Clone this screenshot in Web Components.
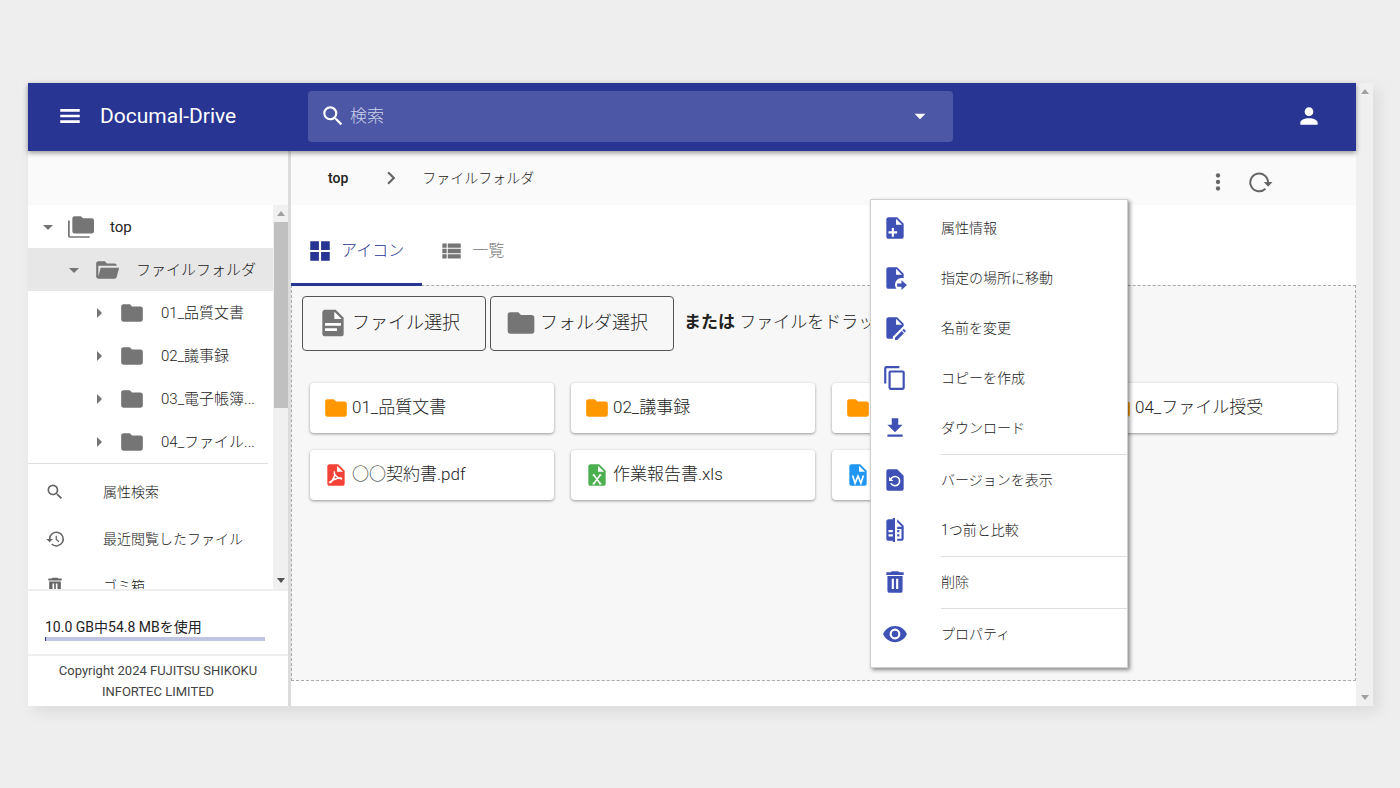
<!DOCTYPE html>
<html lang="ja">
<head>
<meta charset="utf-8">
<title>Documal-Drive</title>
<style>
  * { box-sizing: border-box; }
  body {
    margin: 0;
    min-height: 100vh;
    padding: 83px 27px 82px 28px;
    display: flex;
    background: #eeeeee;
    color: #222222;
    font: 300 14px/20px Roboto, "Noto Sans CJK JP", sans-serif;
  }
</style>
</head>
<body>
<drive-app></drive-app>

<script>
const file = 'M6,2H14L20,8V20A2,2 0 0,1 18,22H6C4.89,22 4,21.1 4,20V4C4,2.89 4.89,2 6,2Z';
const fold = '<path fill="#fff" d="M13,3.5V9H18.5Z"/>';

const icons = {
  menu: '<path d="M3,5.6H21V8H3V5.6M3,10.8H21V13.2H3V10.8M3,16H21V18.4H3V16Z"/>',
  search: '<path d="M9.5,3A6.5,6.5 0 0,1 16,9.5C16,11.11 15.41,12.59 14.44,13.73L14.71,14H15.5L20.5,19L19,20.5L14,15.5V14.71L13.73,14.44C12.59,15.41 11.11,16 9.5,16A6.5,6.5 0 0,1 3,9.5A6.5,6.5 0 0,1 9.5,3M9.5,5C7,5 5,7 5,9.5C5,12 7,14 9.5,14C12,14 14,12 14,9.5C14,7 12,5 9.5,5Z"/>',
  account: '<path d="M12,4A4,4 0 0,1 16,8A4,4 0 0,1 12,12A4,4 0 0,1 8,8A4,4 0 0,1 12,4M12,14C16.42,14 20,15.79 20,18V20H4V18C4,15.79 7.58,14 12,14Z"/>',
  down: '<path d="M7,10L12,15L17,10Z"/>',
  right: '<path d="M10,17L15,12L10,7Z"/>',
  chevron: '<path d="M8.59,16.58L13.17,12L8.59,7.41L10,6L16,12L10,18Z"/>',
  dots: '<circle cx="12" cy="6" r="2"/><circle cx="12" cy="12" r="2"/><circle cx="12" cy="18" r="2"/>',
  reload: '<path d="M17,18.2A8.2,8.2 0 1,1 19.4,13" fill="none" stroke="currentColor" stroke-width="1.8"/><path d="M15.5,12H23.5L19.5,16.4Z"/>',
  folder: '<path d="M10,4H4C2.89,4 2,4.89 2,6V18A2,2 0 0,0 4,20H20A2,2 0 0,0 22,18V8C22,6.89 21.1,6 20,6H12L10,4Z"/>',
  folderOpen: '<path d="M19,20H4C2.89,20 2,19.1 2,18V6C2,4.89 2.89,4 4,4H10L12,6H19A2,2 0 0,1 21,8H4V18L6.14,10H23.21L20.93,18.5C20.7,19.37 19.92,20 19,20Z"/>',
  folders: '<path d="M22,4H14L12,2H6A2,2 0 0,0 4,4V16A2,2 0 0,0 6,18H22A2,2 0 0,0 24,16V6A2,2 0 0,0 22,4M2,6H0V20A2,2 0 0,0 2,22H20V20.6H1.6V6Z"/>',
  history: '<path d="M5.5,13V12A8.2,8.2 0 1,1 8,18" fill="none" stroke="currentColor" stroke-width="1.8"/><path d="M1.5,12H9.5L5.5,16Z"/><path d="M13.5,8V12.5L16.8,15.2" fill="none" stroke="currentColor" stroke-width="1.5"/>',
  trash: '<path d="M9,2H15L16,3H20V5.5H4V3H8ZM5,6.5H19V20A2,2 0 0,1 17,22H7A2,2 0 0,1 5,20ZM9,9V18.5H11V9ZM13,9V18.5H15V9Z" fill-rule="evenodd"/>',
  grid: '<path d="M3,11H11V3H3M3,21H11V13H3M13,21H21V13H13M13,3V11H21V3"/>',
  list: '<path d="M9,5V9H21V5M9,19H21V15H9M9,14H21V10H9M4,9H8V5H4M4,19H8V15H4M4,14H8V10H4V14Z"/>',
  document: `<path d="${file}"/>${fold}<path fill="#fff" d="M6,12H18V14H6ZM6,16H15V18H6Z"/>`,
  fileAdd: `<path d="${file}"/>${fold}<path fill="#fff" d="M11,15V12H9V15H6V17H9V20H11V17H14V15Z"/>`,
  fileMove: '<path d="M14,17H18V14L23,18.5L18,23V20H14V17M13,9H18.5L13,3.5V9M6,2H14L20,8V12.34C19.37,12.12 18.7,12 18,12A6,6 0 0,0 12,18C12,19.54 12.58,20.94 13.53,22H6C4.89,22 4,21.1 4,20V4A2,2 0 0,1 6,2Z"/>',
  fileEdit: '<path d="M6,2C4.89,2 4,2.89 4,4V20A2,2 0 0,0 6,22H10V20.09L20,10.09V8L14,2H6M13,3.5L18.5,9H13V3.5M20.15,13C20,13 19.86,13.05 19.75,13.16L18.73,14.18L20.82,16.26L21.84,15.25C22.05,15.03 22.05,14.67 21.84,14.46L20.54,13.16C20.43,13.05 20.29,13 20.15,13M18.14,14.77L12,20.92V23H14.08L20.23,16.85L18.14,14.77Z"/>',
  copy: '<path d="M19,21H8V7H19M19,5H8A2,2 0 0,0 6,7V21A2,2 0 0,0 8,23H19A2,2 0 0,0 21,21V7A2,2 0 0,0 19,5M16,1H4A2,2 0 0,0 2,3V17H4V3H16V1Z"/>',
  download: '<path d="M5,20H19V18H5M19,9H15V3H9V9H5L12,16L19,9Z"/>',
  restore: '<path d="M14,2H6A2,2 0 0,0 4,4V20A2,2 0 0,0 6,22H18A2,2 0 0,0 20,20V8L14,2M12,18C9.95,18 8.19,16.76 7.42,15H9.13C9.76,15.9 10.81,16.5 12,16.5A3.5,3.5 0 0,0 15.5,13A3.5,3.5 0 0,0 12,9.5C10.65,9.5 9.5,10.28 8.9,11.4L10.5,13H6.5V9L7.8,10.3C8.69,8.92 10.23,8 12,8A5,5 0 0,1 17,13A5,5 0 0,1 12,18Z"/>',
  compare: '<path d="M10,18H6V16H10V18M10,14H6V12H10V14M10,1V2H6C4.89,2 4,2.89 4,4V20A2,2 0 0,0 6,22H10V23H12V1H10M20,8V20C20,21.11 19.11,22 18,22H14V20H18V11H14V9H18.5L14,4.5V2L20,8M16,14H14V12H16V14M16,18H14V16H16V18Z"/>',
  eye: '<path d="M12,9A3,3 0 0,0 9,12A3,3 0 0,0 12,15A3,3 0 0,0 15,12A3,3 0 0,0 12,9M12,17A5,5 0 0,1 7,12A5,5 0 0,1 12,7A5,5 0 0,1 17,12A5,5 0 0,1 12,17M12,4.5C7,4.5 2.73,7.61 1,12C2.73,16.39 7,19.5 12,19.5C17,19.5 21.27,16.39 23,12C21.27,7.61 17,4.5 12,4.5Z"/>',
  pdf: `<path d="${file}"/>${fold}<path d="M10.6,8.5C9.6,11 12.5,15 17,15.6C18,14 11,14.5 6,18.8C7,20 10,15.5 11,11.5" fill="none" stroke="#fff" stroke-width="1.4" stroke-linejoin="round"/>`,
  xls: `<path d="${file}"/>${fold}<path d="M9,12L15,20M15,12L9,20M8,12H10M14,12H16M8,20H10M14,20H16" fill="none" stroke="#fff" stroke-width="1.5"/>`,
  doc: `<path d="${file}"/>${fold}<path d="M7,12.5L9.3,19.5L12,13L14.7,19.5L17,12.5" fill="none" stroke="#fff" stroke-width="1.5"/>`
};

// attaches the shadow root and fills it from a template
class Base extends HTMLElement {
  constructor(){
    super();
    this.attachShadow({mode:'open'});
  }
  connectedCallback(){
    const template = document.createElement('template');
    template.innerHTML = `<style>
      *{ box-sizing: border-box; }
      button, input{ font: inherit; color: inherit; background: none; border: 0; margin: 0; padding: 0; outline: none; }
      button{ cursor: pointer; text-align: left; }
      a{ color: inherit; text-decoration: none; }
    </style>` + this.render();
    this.shadowRoot.appendChild(template.content.cloneNode(true));
  }
}

class DriveIcon extends Base {
  render(){
    return `
    <style>
      :host{ display: block; flex: none; width: 26px; height: 26px; }
      :host([size="small"]){ width: 20px; height: 20px; }
      :host([size="medium"]){ width: 24px; height: 24px; }
      :host([size="large"]){ width: 32px; height: 32px; }
      svg{ display: block; width: 100%; height: 100%; fill: currentColor; }
    </style>
    <svg viewBox="0 0 24 24" aria-hidden="true">${icons[this.getAttribute('name')]}</svg>`
  }
}

class ScrollTrack extends Base {
  render(){
    return `
    <style>
      :host{ display: flex; flex-direction: column; flex: none; width: 17px; background: #f0f0f0; }
      :host([thumb]){ width: 15px; }
      i{ height: 17px; display: flex; align-items: center; justify-content: center; }
      i::before{ content: ""; border: 4px solid transparent; }
      .up::before{ border-top: 0; border-bottom: 5px solid #a0a0a0; }
      .down::before{ border-bottom: 0; border-top: 5px solid #a0a0a0; }
      :host([thumb]) .down::before{ border-top-color: #505050; }
      .rail{ flex: 1; }
      .thumb{ display: none; height: 53%; margin-left: 1px; background: #c0c0c0; }
      :host([thumb]) .thumb{ display: block; }
    </style>
    <i class="up"></i><div class="rail"><div class="thumb"></div></div><i class="down"></i>`
  }
}

class DriveHeader extends Base {
  render(){
    return `
    <style>
      :host{ position: relative; z-index: 2; display: flex; align-items: center; height: 68px; padding: 0 34px 2px 29px; background: #283593; color: #ffffff; box-shadow: 0 2px 5px rgba(0, 0, 0, 0.4); }
      .brand{ display: flex; align-items: center; gap: 17px; width: 251px; flex: none; }
      h1{ margin: 0; font-size: 21px; font-weight: 400; line-height: 28px; }
      .search{ display: flex; align-items: center; gap: 4px; flex: 1; max-width: 645px; height: 51px; padding: 0 20px 0 12px; border-radius: 4px; background: #4c57a5; }
      input{ flex: 1; min-width: 0; font-size: 17px; }
      input::placeholder{ color: #cdd1e8; opacity: 1; }
      .user{ margin-left: auto; }
    </style>
    <div class="brand">
      <button aria-label="メニュー"><drive-icon name="menu"></drive-icon></button>
      <h1>Documal-Drive</h1>
    </div>
    <div class="search">
      <drive-icon name="search"></drive-icon>
      <input type="text" placeholder="検索" aria-label="検索">
      <button aria-label="検索条件"><drive-icon name="down"></drive-icon></button>
    </div>
    <button class="user" aria-label="ユーザー"><drive-icon name="account"></drive-icon></button>`
  }
}

class TreeRow extends Base {
  render(){
    return `
    <style>
      :host{ display: block; --indent: 8px; }
      :host([level="1"]) button{ font-weight: 400; }
      :host([level="2"]){ --indent: 34px; background: #e7e7e7; }
      :host([level="3"]){ --indent: 59px; }
      button{ display: flex; align-items: center; width: 100%; height: 43px; padding-left: var(--indent); font-size: 15px; white-space: nowrap; }
      drive-icon{ color: #757575; }
      drive-icon + drive-icon{ margin: 0 16px 0 8px; }
    </style>
    <button><drive-icon size="medium" name="${this.getAttribute('arrow')}"></drive-icon><drive-icon name="${this.getAttribute('icon')}"></drive-icon><slot></slot></button>`
  }
}

class SideLink extends Base {
  render(){
    return `
    <style>
      :host{ display: block; }
      a{ display: flex; align-items: center; gap: 38px; height: 47px; padding-left: 17px; }
      drive-icon{ color: #666666; }
    </style>
    <a href="#"><drive-icon size="small" name="${this.getAttribute('icon')}"></drive-icon><slot></slot></a>`
  }
}

class DriveSidebar extends Base {
  render(){
    return `
    <style>
      :host{ display: flex; flex-direction: column; flex: none; width: 263px; border-right: 3px solid #dcdcdc; background: #ffffff; }
      .blank{ height: 54px; flex: none; background: #fafafa; }
      .scroll{ display: flex; flex: 1 1 0; min-height: 0; }
      nav{ flex: 1; overflow: hidden; height: 384px; }
      .links{ margin-right: 5px; padding-top: 4px; border-top: 1px solid #dddddd; }
      .usage{ height: 65px; padding: 26px 23px 0 17px; border-top: 2px solid #eeeeee; font-weight: 400; }
      label{ display: block; }
      progress{ appearance: none; display: block; width: 100%; height: 4px; border: 0; }
      progress::-webkit-progress-bar{ background: #bfc4e2; }
      progress::-webkit-progress-value{ background: #283593; }
      footer{ padding: 4px 20px; border-top: 2px solid #eeeeee; color: #444444; font-size: 13px; font-weight: 400; line-height: 21px; text-align: center; }
    </style>
    <div class="blank"></div>
    <div class="scroll">
      <nav>
        <tree-row level="1" arrow="down" icon="folders">top</tree-row>
        <tree-row level="2" arrow="down" icon="folderOpen">ファイルフォルダ</tree-row>
        <tree-row level="3" arrow="right" icon="folder">01_品質文書</tree-row>
        <tree-row level="3" arrow="right" icon="folder">02_議事録</tree-row>
        <tree-row level="3" arrow="right" icon="folder">03_電子帳簿...</tree-row>
        <tree-row level="3" arrow="right" icon="folder">04_ファイル...</tree-row>
        <div class="links">
          <side-link icon="search">属性検索</side-link>
          <side-link icon="history">最近閲覧したファイル</side-link>
          <side-link icon="trash">ゴミ箱</side-link>
        </div>
      </nav>
      <scroll-track thumb></scroll-track>
    </div>
    <div class="usage">
      <label for="quota">10.0 GB中54.8 MBを使用</label>
      <progress id="quota" max="10000" value="54"></progress>
    </div>
    <footer>Copyright 2024 FUJITSU SHIKOKU<br>INFORTEC LIMITED</footer>`
  }
}

class CrumbBar extends Base {
  render(){
    return `
    <style>
      :host{ display: flex; align-items: center; height: 54px; padding: 0 83px 0 37px; background: #fafafa; }
      drive-icon{ color: #666666; }
      nav{ display: flex; align-items: center; gap: 18px; }
      .top{ margin-right: 12px; font-weight: 500; }
      .tools{ display: flex; gap: 16px; margin-left: auto; padding-top: 8px; }
    </style>
    <nav><a class="top" href="#">top</a><drive-icon name="chevron"></drive-icon><a href="#">ファイルフォルダ</a></nav>
    <div class="tools">
      <button aria-label="その他"><drive-icon name="dots"></drive-icon></button>
      <button aria-label="更新"><drive-icon name="reload"></drive-icon></button>
    </div>`
  }
}

class ViewTab extends Base {
  render(){
    return `
    <style>
      :host{ display: flex; color: #757575; }
      button{ display: flex; align-items: center; gap: 8px; height: 81px; padding: 14px 18px 0 16px; border-bottom: 3px solid transparent; font-size: 16px; }
      :host([selected]){ position: relative; color: #283593; }
      :host([selected]) button{ border-color: #283593; }
    </style>
    <button role="tab"><drive-icon name="${this.getAttribute('icon')}"></drive-icon><slot></slot></button>`
  }
}

class PickButton extends Base {
  render(){
    return `
    <style>
      :host{ display: block; }
      button{ display: flex; align-items: center; gap: 3px; height: 55px; padding: 0 25px 2px 14px; border: 1px solid #555555; border-radius: 4px; font-size: 18px; white-space: nowrap; }
      drive-icon{ color: #757575; }
    </style>
    <button><drive-icon size="large" name="${this.getAttribute('icon')}"></drive-icon><slot></slot></button>`
  }
}

class FileCard extends Base {
  render(){
    return `
    <style>
      :host{ display: block; --tint: #ff9800; }
      :host([icon="pdf"]){ --tint: #f44336; }
      :host([icon="xls"]){ --tint: #4caf50; }
      :host([icon="doc"]){ --tint: #2196f3; }
      button{ display: flex; align-items: center; gap: 3px; width: 100%; height: 50px; padding: 0 0 3px 13px; border-radius: 4px; background: #ffffff; box-shadow: 0 1px 3px rgba(0, 0, 0, 0.4); font-size: 17px; white-space: nowrap; }
      drive-icon{ margin-top: 2px; color: var(--tint); }
    </style>
    <button><drive-icon name="${this.getAttribute('icon')}"></drive-icon><slot></slot></button>`
  }
}

class MenuItem extends Base {
  render(){
    return `
    <style>
      :host{ display: block; }
      :host([divided])::before{ content: ""; display: block; margin: 1px 0 0 70px; border-top: 1px solid #dddddd; }
      button{ display: flex; align-items: center; gap: 33px; width: 100%; height: 50px; padding-left: 11px; }
      drive-icon{ color: #3f51b5; }
    </style>
    <button role="menuitem"><drive-icon name="${this.getAttribute('icon')}"></drive-icon><slot></slot></button>`
  }
}

class ContextMenu extends Base {
  render(){
    return `
    <style>
      :host{ display: block; width: 258px; padding: 3px 0 8px; border: 1px solid #d0d0d0; background: #ffffff; box-shadow: 2px 2px 4px rgba(0, 0, 0, 0.45); }
    </style>
    <slot></slot>`
  }
}

class DriveMain extends Base {
  render(){
    return `
    <style>
      :host{ position: relative; display: flex; flex-direction: column; flex: 1; min-width: 0; background: #ffffff; }
      .tabs{ display: flex; }
      .drop{ flex: 1; margin: -1px 0 25px; padding: 10px 18px; border: 1px dashed #aaaaaa; background: #f7f7f7; }
      .pick{ display: flex; align-items: center; gap: 4px; margin: 0 0 32px -8px; font-size: 17px; white-space: nowrap; }
      .pick p{ margin: 0 0 0 6px; padding-bottom: 4px; line-height: 24px; }
      .cards{ display: grid; grid-template-columns: repeat(4, minmax(0, 1fr)); gap: 17px; }
      context-menu{ position: absolute; z-index: 1; top: 48px; right: 228px; }
      b{ font-weight: 700; }
    </style>
    <crumb-bar></crumb-bar>
    <div class="tabs" role="tablist">
      <view-tab icon="grid" selected>アイコン</view-tab>
      <view-tab icon="list">一覧</view-tab>
    </div>
    <div class="drop">
      <div class="pick">
        <pick-button icon="document">ファイル選択</pick-button>
        <pick-button icon="folder">フォルダ選択</pick-button>
        <p><b>または</b> ファイルをドラッ</p>
      </div>
      <div class="cards">
        <file-card icon="folder">01_品質文書</file-card>
        <file-card icon="folder">02_議事録</file-card>
        <file-card icon="folder"></file-card>
        <file-card icon="folder">04_ファイル授受</file-card>
        <file-card icon="pdf">○○契約書.pdf</file-card>
        <file-card icon="xls">作業報告書.xls</file-card>
        <file-card icon="doc"></file-card>
      </div>
    </div>
    <context-menu role="menu">
      <menu-item icon="fileAdd">属性情報</menu-item>
      <menu-item icon="fileMove">指定の場所に移動</menu-item>
      <menu-item icon="fileEdit">名前を変更</menu-item>
      <menu-item icon="copy">コピーを作成</menu-item>
      <menu-item icon="download">ダウンロード</menu-item>
      <menu-item icon="restore" divided>バージョンを表示</menu-item>
      <menu-item icon="compare">1つ前と比較</menu-item>
      <menu-item icon="trash" divided>削除</menu-item>
      <menu-item icon="eye" divided>プロパティ</menu-item>
    </context-menu>`
  }
}

class DriveApp extends Base {
  render(){
    return `
    <style>
      :host{ display: flex; flex: 1; min-width: 0; box-shadow: 6px 6px 14px rgba(0, 0, 0, 0.08); }
      .page{ display: flex; flex-direction: column; flex: 1; min-width: 0; }
      .body{ display: flex; flex: 1; }
    </style>
    <div class="page">
      <drive-header></drive-header>
      <div class="body"><drive-sidebar></drive-sidebar><drive-main></drive-main></div>
    </div>
    <scroll-track></scroll-track>`
  }
}

customElements.define('drive-icon', DriveIcon)
customElements.define('scroll-track', ScrollTrack)
customElements.define('drive-header', DriveHeader)
customElements.define('tree-row', TreeRow)
customElements.define('side-link', SideLink)
customElements.define('drive-sidebar', DriveSidebar)
customElements.define('crumb-bar', CrumbBar)
customElements.define('view-tab', ViewTab)
customElements.define('pick-button', PickButton)
customElements.define('file-card', FileCard)
customElements.define('menu-item', MenuItem)
customElements.define('context-menu', ContextMenu)
customElements.define('drive-main', DriveMain)
customElements.define('drive-app', DriveApp)
</script>
</body>
</html>
